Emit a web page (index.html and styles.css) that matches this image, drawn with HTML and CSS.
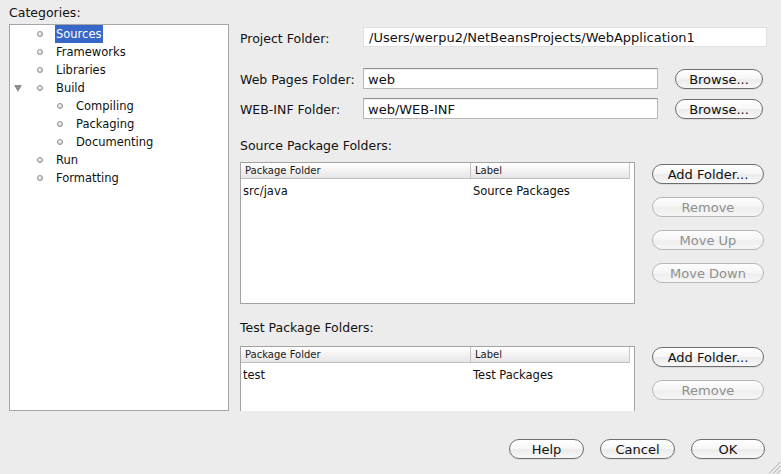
FILE: index.html
```html
<!DOCTYPE html>
<html>
<head>
<meta charset="utf-8">
<link rel="stylesheet" href="styles.css">
</head>
<body>
<div class="dialog">
  <div class="main">
    <div class="left">
      <div class="cat-label">Categories:</div>
      <div class="tree">
        <div class="node"><span class="twisty"></span><span class="dot"></span><span class="name sel">Sources</span></div>
        <div class="node"><span class="twisty"></span><span class="dot"></span><span class="name">Frameworks</span></div>
        <div class="node"><span class="twisty"></span><span class="dot"></span><span class="name">Libraries</span></div>
        <div class="node"><span class="twisty open"></span><span class="dot"></span><span class="name">Build</span></div>
        <div class="node child"><span class="twisty"></span><span class="dot"></span><span class="name">Compiling</span></div>
        <div class="node child"><span class="twisty"></span><span class="dot"></span><span class="name">Packaging</span></div>
        <div class="node child"><span class="twisty"></span><span class="dot"></span><span class="name">Documenting</span></div>
        <div class="node"><span class="twisty"></span><span class="dot"></span><span class="name">Run</span></div>
        <div class="node"><span class="twisty"></span><span class="dot"></span><span class="name">Formatting</span></div>
      </div>
    </div>
    <div class="right">
      <div class="frow r1"><label>Project Folder:</label><div class="field ro">/Users/werpu2/NetBeansProjects/WebApplication1</div></div>
      <div class="frow r2"><label>Web Pages Folder:</label><div class="field">web</div><div class="btn browse">Browse...</div></div>
      <div class="frow r3"><label>WEB-INF Folder:</label><div class="field">web/WEB-INF</div><div class="btn browse">Browse...</div></div>
      <div class="sec-label">Source Package Folders:</div>
      <div class="tablearea">
        <div class="table">
          <div class="thead"><div class="c1">Package Folder</div><div class="c2">Label</div></div>
          <div class="trow"><div class="c1">src/java</div><div class="c2">Source Packages</div></div>
        </div>
        <div class="btns">
          <div class="btn">Add Folder...</div>
          <div class="btn dis">Remove</div>
          <div class="btn dis">Move Up</div>
          <div class="btn dis">Move Down</div>
        </div>
      </div>
      <div class="sec-label t">Test Package Folders:</div>
      <div class="tablearea t">
        <div class="table t">
          <div class="thead"><div class="c1">Package Folder</div><div class="c2">Label</div></div>
          <div class="trow"><div class="c1">test</div><div class="c2">Test Packages</div></div>
        </div>
        <div class="btns t">
          <div class="btn">Add Folder...</div>
          <div class="btn dis">Remove</div>
        </div>
      </div>
    </div>
  </div>
  <div class="footer">
    <div class="btn fb">Help</div>
    <div class="btn fb">Cancel</div>
    <div class="btn fb ok">OK</div>
  </div>
  <svg class="grip" width="13" height="13" viewBox="0 0 13 13">
    <line x1="12.5" y1="1" x2="1" y2="12.5" stroke="#a8a8a8" stroke-width="1"/>
    <line x1="12.5" y1="5" x2="5" y2="12.5" stroke="#a8a8a8" stroke-width="1"/>
    <line x1="12.5" y1="9" x2="9" y2="12.5" stroke="#a8a8a8" stroke-width="1"/>
  </svg>
</div>
</body>
</html>
```
FILE: styles.css
```css
* { box-sizing: border-box; }
html, body { margin: 0; padding: 0; }
body {
  background: #ececec;
  font-family: "DejaVu Sans", "Noto Sans", sans-serif;
  font-size: 12.5px;
  color: #111;
  width: 781px;
  height: 474px;
  overflow: hidden;
}
.dialog {
  position: relative;
  width: 781px;
  height: 474px;
  display: flex;
  flex-direction: column;
}
.main {
  display: flex;
  height: 411px;
  flex-shrink: 0;
  padding-left: 9px;
  gap: 11px;
  overflow: hidden;
}
.left {
  width: 220px;
  display: flex;
  flex-direction: column;
}
.cat-label {
  height: 16px;
  line-height: 16px;
  margin-top: 5px;
  margin-bottom: 3px;
}
.tree {
  flex: 1;
  background: #fff;
  border: 1px solid #a6a6a6;
  font-size: 11.5px;
}
.node {
  display: flex;
  align-items: center;
  height: 18px;
  padding-left: 4px;
}
.node.child { padding-left: 24px; }
.twisty {
  width: 23px;
  height: 18px;
  display: flex;
  align-items: center;
}
.twisty.open::before {
  content: "";
  width: 0;
  height: 0;
  border-left: 4px solid transparent;
  border-right: 4px solid transparent;
  border-top: 7px solid #8e8e8e;
}
.dot {
  width: 6px;
  height: 6px;
  border-radius: 50%;
  background: radial-gradient(circle at 40% 35%, #fbfbfb, #bdbdbd);
  border: 1px solid #8f8f8f;
  margin-right: 13px;
  margin-top: -1px;
}
.name {
  height: 18px;
  line-height: 17px;
  padding: 1px 1px 0 1px;
  margin-left: -1px;
}
.name.sel {
  background: #3767c8;
  color: #fff;
}
.right {
  flex: 1;
  display: flex;
  flex-direction: column;
  padding-right: 14px;
}
.right > * { flex-shrink: 0; }
.frow {
  display: flex;
  align-items: center;
}
.frow label {
  width: 123px;
  flex-shrink: 0;
  padding-top: 2px;
}
.r1 { margin-top: 27px; height: 20px; }
.r2 { margin-top: 21px; height: 21px; }
.r3 { margin-top: 9px; height: 21px; }
.field {
  height: 100%;
  width: 295px;
  background: #fff;
  border: 1px solid #b8b8b8;
  border-top-color: #8e8e8e;
  padding-left: 4px;
  padding-top: 1px;
  display: flex;
  align-items: center;
  font-size: 13px;
  box-shadow: inset 0 1px 1px rgba(0,0,0,0.06);
}
.field.ro {
  flex: 1;
  width: auto;
  border-color: #e0e0e0;
  padding-left: 5px;
  box-shadow: none;
}
.btn {
  height: 20px;
  border-radius: 10px;
  border: 1px solid #6e6e6e;
  background: linear-gradient(to bottom, #ffffff 0%, #f7f7f7 45%, #ebebeb 55%, #f8f8f8 100%);
  box-shadow: 0 1px 0 rgba(0,0,0,0.07);
  display: flex;
  align-items: center;
  justify-content: center;
  font-size: 13px;
  padding-top: 1px;
  color: #111;
  flex-shrink: 0;
}
.btn.dis {
  color: #8f8f8f;
  border-color: #b6b6b6;
  background: linear-gradient(to bottom, #fdfdfd 0%, #f5f5f5 50%, #eeeeee 55%, #f6f6f6 100%);
  box-shadow: none;
}
.browse {
  margin-left: 17px;
  width: 88px;
  height: 20px;
}
.sec-label {
  margin-top: 18px;
  height: 16px;
  line-height: 16px;
  padding-top: 1px;
}
.sec-label.t { margin-top: 15px; }
.tablearea {
  display: flex;
  margin-top: 9px;
  gap: 17px;
  align-items: flex-start;
}
.tablearea.t { margin-top: 11px; }
.table {
  width: 395px;
  height: 142px;
  background: #fff;
  border: 1px solid #a3a3a3;
  flex-shrink: 0;
}
.table.t { height: 90px; }
.thead {
  display: flex;
  height: 16px;
  margin-right: 4px;
  background: linear-gradient(to bottom, #ffffff, #e6e6e6);
  border-bottom: 1px solid #bdbdbd;
  border-right: 1px solid #c8c8c8;
  font-size: 10px;
  line-height: 15px;
  color: #1a1a1a;
}
.thead .c1 {
  width: 230px;
  padding-left: 4px;
  border-right: 1px solid #c2c2c2;
}
.thead .c2 { padding-left: 4px; }
.trow {
  display: flex;
  height: 22px;
  align-items: center;
  font-size: 11.5px;
  padding-top: 1px;
}
.trow .c1 { width: 230px; padding-left: 2px; }
.trow .c2 { padding-left: 2px; }
.btns {
  display: flex;
  flex-direction: column;
  gap: 13px;
  padding-top: 2px;
  width: 112px;
}
.btns.t { padding-top: 1px; }
.footer {
  display: flex;
  justify-content: flex-end;
  gap: 16px;
  padding: 28px 16px 0 0;
}
.fb { width: 75px; }
.fb.ok { width: 74px; }
.grip {
  position: absolute;
  right: 0;
  bottom: 0;
}
```
